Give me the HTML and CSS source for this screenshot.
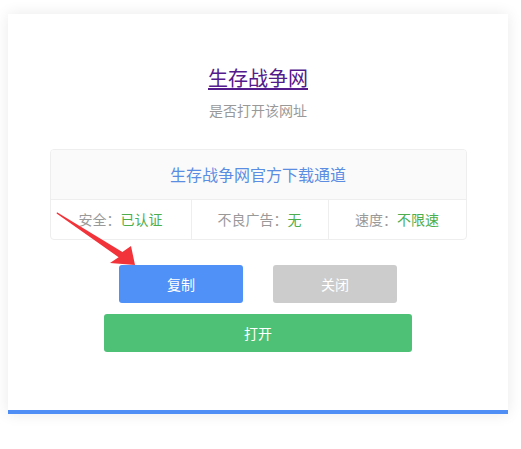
FILE: index.html
```html
<!DOCTYPE html>
<html lang="zh-CN">
<head>
<meta charset="utf-8">
<title>生存战争网</title>
<link rel="stylesheet" href="styles.css">
</head>
<body>
<div class="page">
  <div class="card">
    <a class="title" href="#">生存战争网</a>
    <div class="subtitle">是否打开该网址</div>
    <div class="info">
      <div class="info-head">生存战争网官方下载通道</div>
      <div class="info-row">
        <div class="cell">安全：<span class="ok">已认证</span></div>
        <div class="cell">不良广告：<span class="ok">无</span></div>
        <div class="cell">速度：<span class="ok">不限速</span></div>
      </div>
    </div>
    <div class="btn-row">
      <div class="btn btn-copy">复制</div>
      <div class="btn btn-close">关闭</div>
    </div>
    <div class="btn btn-open">打开</div>
  </div>
</div>
<svg class="arrow" width="521" height="449" viewBox="0 0 521 449">
  <polygon points="57,212.3 122.4,252 131,246 135,265 110,263 118.6,257.2 56.6,213.6" fill="#f2333a"/>
</svg>
</body>
</html>
```
FILE: styles.css
```css
html, body {
  margin: 0;
  padding: 0;
  background: #fff;
}
body {
  font-family: "Microsoft YaHei", "Noto Sans CJK SC", "Noto Sans", sans-serif;
  position: relative;
  width: 521px;
  height: 449px;
  overflow: hidden;
}
.page {
  padding: 14px 0 0 8px;
}
.card {
  width: 500px;
  height: 396px;
  box-sizing: content-box;
  background: #fff;
  border-bottom: 4px solid #4f8ef5;
  box-shadow: 0 0 14px rgba(0, 0, 0, 0.09);
  display: flex;
  flex-direction: column;
  align-items: center;
  padding-top: 0;
}
.title {
  margin-top: 50px;
  font-size: 20px;
  line-height: 28px;
  color: #551a8b;
  text-decoration: underline;
  text-underline-offset: 2px;
}
.subtitle {
  margin-top: 8px;
  font-size: 14px;
  line-height: 20px;
  color: #999;
}
.info {
  margin-top: 29px;
  width: 417px;
  border: 1px solid #eee;
  border-radius: 4px;
  box-sizing: border-box;
  overflow: hidden;
}
.info-head {
  height: 49px;
  line-height: 49px;
  background: #fafafa;
  border-bottom: 1px solid #eee;
  text-align: center;
  font-size: 16px;
  color: #5b8de2;
}
.info-row {
  display: grid;
  grid-template-columns: 140px 137px 1fr;
  height: 39px;
}
.cell {
  line-height: 39px;
  text-align: center;
  font-size: 14px;
  color: #999;
  border-left: 1px solid #eee;
}
.cell:first-child {
  border-left: none;
}
.ok {
  color: #4cae4c;
}
.btn-row {
  margin-top: 25px;
  display: flex;
  gap: 30px;
}
.btn {
  height: 38px;
  line-height: 38px;
  border-radius: 3px;
  text-align: center;
  font-size: 14px;
  color: #fff;
}
.btn-copy {
  width: 124px;
  background: #5091f8;
}
.btn-close {
  width: 124px;
  background: #cccccc;
}
.btn-open {
  margin-top: 11px;
  width: 308px;
  background: #4ec177;
}
.arrow {
  position: absolute;
  left: 0;
  top: 0;
  pointer-events: none;
}
```
